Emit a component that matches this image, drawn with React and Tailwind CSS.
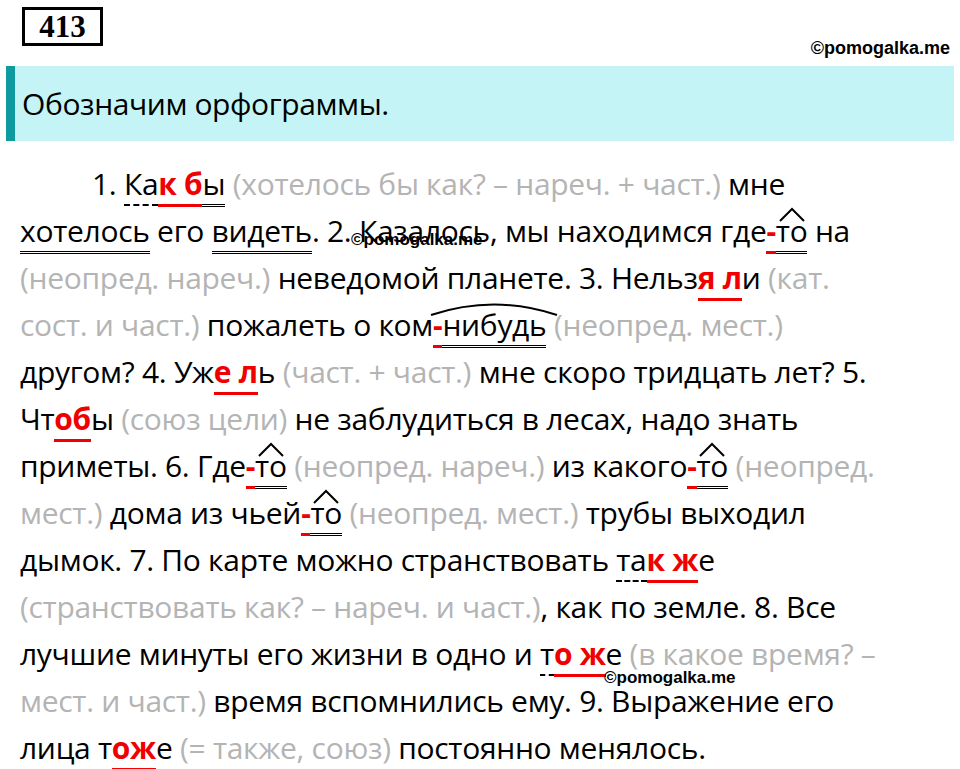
import React from "react";

const G = ({ children }) => <span className="text-[#b4b4b4]">{children}</span>;
const R = ({ children }) => (
  <span className="text-[#f00000] font-bold border-b-[3px] border-[#f00000]">{children}</span>
);
const D = ({ children }) => (
  <span className="border-b-[3px] border-double border-black leading-none">{children}</span>
);
const Dash = ({ children }) => (
  <span className="border-b-[2px] border-dashed border-black">{children}</span>
);
const Hy = () => <span className="text-[#f00000] font-bold border-b-[3px] border-[#f00000]">-</span>;
const Roof = ({ children, wide }) => (
  <span className="relative inline-block">
    <svg className="absolute left-1/2 -translate-x-1/2 top-[-2px]" width={wide ? 130 : 30} height="16" viewBox={wide ? "0 0 130 16" : "0 0 30 16"}>
      {wide ? (
        <path d="M2 15 Q65 -6 128 15" stroke="black" strokeWidth="2" fill="none" />
      ) : (
        <path d="M3 15 L15 3 L27 15" stroke="black" strokeWidth="2" fill="none" />
      )}
    </svg>
    <D>{children}</D>
  </span>
);

const Line = ({ children, className = "" }) => (
  <div className={"h-[47px] flex items-center whitespace-nowrap " + className}>
    <span>{children}</span>
  </div>
);

export default function App() {
  return (
    <div className="relative w-[960px] h-[769px] bg-white overflow-hidden" style={{ fontFamily: "'Open Sans', sans-serif" }}>
      <div className="flex justify-between items-start pl-[22px] pr-[10px] pt-[7px]">
        <div className="border-[3px] border-black w-[81px] h-[39px] flex items-center justify-center text-[31px] font-bold leading-none" style={{ fontFamily: "'Liberation Serif', serif" }}>413</div>
        <div className="mt-[32px] text-[18px] font-bold leading-none" style={{ fontFamily: "'Liberation Sans', sans-serif" }}>©pomogalka.me</div>
      </div>
      <div className="mx-[6px] mt-[9px] h-[75px] bg-[#c4f4f6] flex items-center border-l-[9px] border-[#0f9a9f]">
        <span className="pl-[7px] text-[30px] tracking-[-0.4px]">Обозначим орфограммы.</span>
      </div>
      <div className="pl-[20px] pt-[19px] text-[30px] tracking-[-0.3px] text-black">
        <Line className="pl-[72px]">1. <Dash>Ка</Dash><R>к б</R><D>ы</D> <G>(хотелось бы как? – нареч. + част.)</G> мне</Line>
        <Line><D>хотелось</D> его <D>видеть</D>. 2. Казалось, мы находимся где<Hy /><Roof>то</Roof> на</Line>
        <Line><G>(неопред. нареч.)</G> неведомой планете. 3. Нельз<R>я л</R>и <G>(кат.</G></Line>
        <Line><G>сост. и част.)</G> пожалеть о ком<Hy /><Roof wide>нибудь</Roof> <G>(неопред. мест.)</G></Line>
        <Line>другом? 4. Уж<R>е л</R>ь <G>(част. + част.)</G> мне скоро тридцать лет? 5.</Line>
        <Line>Чт<R>об</R>ы <G>(союз цели)</G> не заблудиться в лесах, надо знать</Line>
        <Line>приметы. 6. Где<Hy /><Roof>то</Roof> <G>(неопред. нареч.)</G> из какого<Hy /><Roof>то</Roof> <G>(неопред.</G></Line>
        <Line><G>мест.)</G> дома из чьей<Hy /><Roof>то</Roof> <G>(неопред. мест.)</G> трубы выходил</Line>
        <Line>дымок. 7. По карте можно странствовать <Dash>та</Dash><R>к ж</R>е</Line>
        <Line><G>(странствовать как? – нареч. и част.)</G>, как по земле. 8. Все</Line>
        <Line>лучшие минуты его жизни в одно и <Dash>т</Dash><R>о ж</R>е <G>(в какое время? –</G></Line>
        <Line><G>мест. и част.)</G> время вспомнились ему. 9. Выражение его</Line>
        <Line>лица т<R>ож</R>е <G>(= также, союз)</G> постоянно менялось.</Line>
      </div>
      <div className="absolute left-[351px] top-[231px] text-[17px] font-bold leading-none" style={{ fontFamily: "'Liberation Sans', sans-serif" }}>©pomogalka.me</div>
      <div className="absolute left-[604px] top-[669px] text-[17px] font-bold leading-none" style={{ fontFamily: "'Liberation Sans', sans-serif" }}>©pomogalka.me</div>
    </div>
  );
}
